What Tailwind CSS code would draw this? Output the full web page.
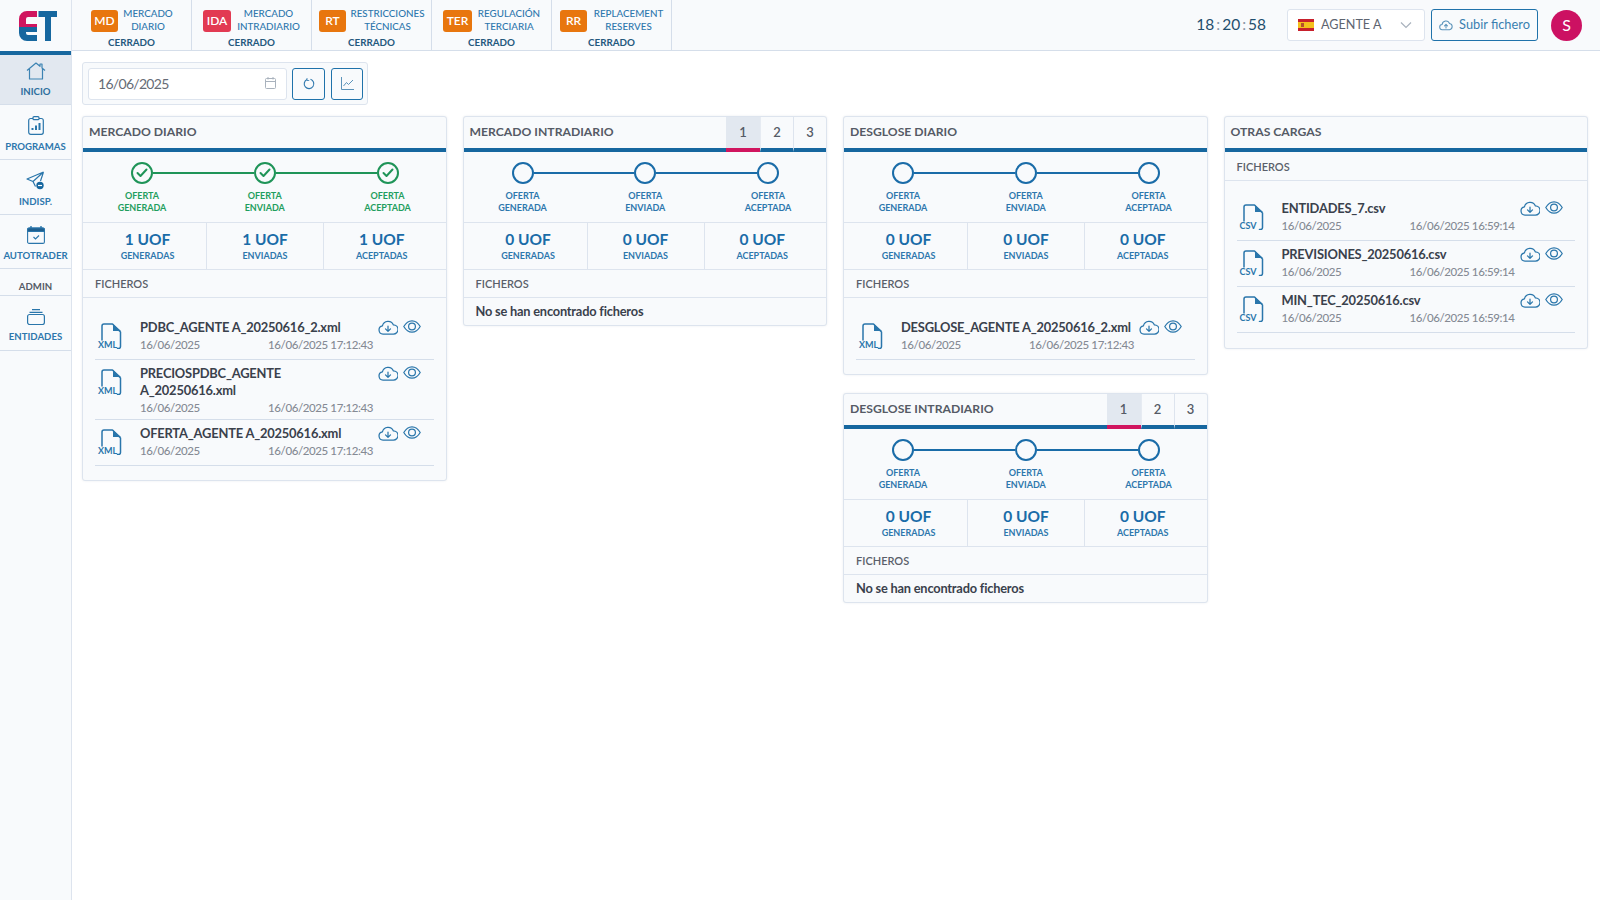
<!DOCTYPE html>
<html lang="es">
<head>
    <meta charset="UTF-8">
    <title>ET - Inicio</title>
    <script src="https://cdn.jsdelivr.net/npm/@tailwindcss/browser@4"></script>
</head>
<body class="bg-white [font-family:Lato,sans-serif] text-[#333a45] overflow-hidden">
<div class="flex h-[900px]">
    <!-- Sidebar -->
    <aside class="w-[72px] shrink-0 bg-[#f8fafc] border-r border-[#dde4ee] flex flex-col">
        <div class="h-[51px] flex items-center justify-center pl-[4px]">
            <svg width="38" height="30" viewBox="0 0 38 30">
                <path d="M8 0h10v6H9a2 2 0 0 0-2 2v5h11v5H0V8a8 8 0 0 1 8-8z" fill="#d0155f"/>
                <path d="M0 16h18v5H7v1a2 2 0 0 0 2 2h9v6H8a8 8 0 0 1-8-8z" fill="#16679f"/>
                <path d="M19.500 0H38v6h-6v24h-6V6h-6.500z" fill="#16679f"/>
            </svg>
        </div>
        <div class="h-[4px] bg-[#16679f]"></div>
        <div id="nav"></div>
    </aside>

    <div class="flex-1 min-w-0">
        <!-- Top bar -->
        <header class="h-[51px] bg-[#f8fafc] border-b border-[#d5deea] flex items-stretch">
            <div id="markets" class="flex"></div>
            <div class="ml-auto flex items-center pr-[18px]">
                <div class="text-[15.5px] text-[#1f4e6e] mr-[21px]">18<span class="text-[#8a97a5] mx-[2px]">:</span>20<span class="text-[#8a97a5] mx-[2px]">:</span>58</div>
                <div class="w-[138px] h-[32px] bg-white border border-[#dde4ee] rounded-[3px] flex items-center pl-[10px] pr-[12px] mr-[6px]">
                    <span class="w-[16px] h-[12px] flex flex-col mr-[7px]">
                        <span class="h-[3px] bg-[#c8202c]"></span>
                        <span class="h-[6px] bg-[#f5bf1c] pl-[3px] pt-[1px]"><span class="block w-[3px] h-[4px] bg-[#b5502a]"></span></span>
                        <span class="h-[3px] bg-[#c8202c]"></span>
                    </span>
                    <span class="text-[12.6px] text-[#5d6470]">AGENTE A</span>
                    <svg class="ml-auto" width="12" height="8" viewBox="0 0 12 8" fill="none" stroke="#a9b2bd" stroke-width="1.200"><path d="M1 1.500l5 5 5-5"/></svg>
                </div>
                <button class="w-[107px] h-[32px] border border-[#1f72aa] rounded-[3px] flex items-center justify-center gap-[6px] text-[12.8px] text-[#3a7fb0] mr-[13px]">
                    <svg width="14" height="12" viewBox="0 0 24 20" fill="none" stroke="#5b93ba" stroke-width="1.800" stroke-linecap="round" stroke-linejoin="round"><path d="M6 18a4.500 4.500 0 0 1-.6-9A6.500 6.500 0 0 1 18 7.500 5.300 5.300 0 0 1 18 18z"/><path d="M12 15V9M9.500 11.500L12 9l2.500 2.500"/></svg>
                    Subir fichero
                </button>
                <div class="w-[31px] h-[31px] rounded-full bg-[#cc1162] text-white text-[16px] flex items-center justify-center">S</div>
            </div>
        </header>

        <main class="pt-[11px] pl-[10px] pr-[12px]">
            <!-- Date picker -->
            <div class="w-[286px] h-[43px] bg-[#f8fafc] border border-[#dde4ee] rounded-[3px] flex items-center pl-[5px] gap-[5px]">
                <div class="w-[199px] h-[32px] bg-white border border-[#dde4ee] rounded-[3px] flex items-center justify-between pl-[9px] pr-[10px] pb-[1px] text-[14px] tracking-[-0.7px] text-[#666c76]">
                    16/06/2025
                    <svg width="11" height="12" viewBox="0 0 11 12" fill="none" stroke="#a9b2bd" stroke-width="1"><rect x="0.500" y="1.500" width="10" height="10" rx="1"/><path d="M0.500 4.500h10M3 0v2.500M8 0v2.500"/></svg>
                </div>
                <button class="w-[33px] h-[32px] border border-[#1f72aa] rounded-[3px] flex items-center justify-center">
                    <svg width="12" height="12" viewBox="0 0 12 12" fill="none" stroke="#2d77ad" stroke-width="1.100"><path d="M7.500 1.300A4.800 4.800 0 1 1 4 1.500"/><path d="M4 0v2.500h2.200" stroke-width="0.800"/></svg>
                </button>
                <button class="w-[32px] h-[32px] ml-[1px] border border-[#1f72aa] rounded-[3px] flex items-center justify-center">
                    <svg width="13" height="13" viewBox="0 0 13 13" fill="none" stroke="#5b93ba" stroke-width="1"><path d="M0.500 0v12.500H13"/><path d="M2.500 9l3-3.500 2 2L12 3"/></svg>
                </button>
            </div>
            <!-- Columns -->
            <div class="grid grid-cols-4 gap-x-[16px] items-start mt-[11px]">
                <div id="col1"></div>
                <div id="col2"></div>
                <div id="col3" class="flex flex-col gap-[18px]"></div>
                <div id="col4"></div>
            </div>
        </main>
    </div>
</div>

<script>
const cloudIcon = `<svg width="20" height="16" viewBox="0 0 24 19" fill="none" stroke="#2a76ab" stroke-width="1.500" stroke-linecap="round" stroke-linejoin="round"><path d="M6 18a5 5 0 0 1-.7-9.900A7 7 0 0 1 18.500 7 5.500 5.500 0 0 1 18.500 18z"/><path d="M12 8.500v6M9 11.800l3 3 3-3"/></svg>`;
const eyeIcon = `<svg width="18" height="13" viewBox="0 0 18 13" fill="none" stroke="#2a76ab" stroke-width="1.200"><path d="M0.800 6.500C3 2.700 5.800 0.800 9 0.800s6 1.900 8.200 5.700C15 10.300 12.200 12.200 9 12.200S3 10.300 0.800 6.500z"/><circle cx="9" cy="6.500" r="3.400"/></svg>`;

const navIcons = {
    home: `<svg width="20" height="18" viewBox="0 0 20 18" fill="none" stroke="#3d83b3" stroke-width="1.200" stroke-linejoin="round"><path d="M1 8.500L10 1l4 3.300V2h2v4l3 2.500M3.500 7v10h13V7"/></svg>`,
    prog: `<svg width="16" height="19" viewBox="0 0 16 19" fill="none" stroke="#2a76ab" stroke-width="1.200"><rect x="0.700" y="2.500" width="14.600" height="15.800" rx="2"/><rect x="5" y="0.700" width="6" height="3" rx="1" fill="#f8fafc"/><path d="M4.500 14v-2M8 14V9.500M11.500 14V7" stroke-width="2"/></svg>`,
    plane: `<svg width="19" height="19" viewBox="0 0 19 19" fill="none" stroke="#2a76ab" stroke-width="1.200" stroke-linejoin="round"><path d="M17.500 1L1 8l6 2.500 2.500 5M17.500 1L7 10.500M17.500 1l-3 9"/><circle cx="14" cy="14.500" r="3.700" fill="#16679f" stroke="none"/><path d="M12 14.500h4" stroke="#fff" stroke-width="1.200"/></svg>`,
    cal: `<svg width="18" height="18" viewBox="0 0 18 18" fill="none" stroke="#2a76ab" stroke-width="1.100"><rect x="0.600" y="2" width="16.800" height="15.400" rx="1.500"/><path d="M0.600 3.500a1.500 1.500 0 0 1 1.500-1.500h13.800a1.500 1.500 0 0 1 1.500 1.500V5.500H0.600z" fill="#1f5f8f"/><path d="M4 0v2M14 0v2" stroke-width="1.400"/><path d="M6.500 11l2 2 3.500-3.500"/></svg>`,
    stack: `<svg width="18" height="16" viewBox="0 0 18 16" fill="none" stroke="#2a76ab" stroke-width="1.200"><rect x="0.600" y="5.500" width="16.800" height="10" rx="2"/><path d="M2.500 3.300h13M5 0.700h8"/></svg>`
};

const navItems = [
    { label: 'INICIO', icon: navIcons.home, h: 'h-[50px] pt-[2px]', active: true },
    { label: 'PROGRAMAS', icon: navIcons.prog, h: 'h-[55px] pt-[7px]' },
    { label: 'INDISP.', icon: navIcons.plane, h: 'h-[55px] pt-[7px]' },
    { label: 'AUTOTRADER', icon: navIcons.cal, h: 'h-[54px] pt-[7px]' },
    { admin: true },
    { label: 'ENTIDADES', icon: navIcons.stack, h: 'h-[55px] pt-[7px]' }
];

document.getElementById('nav').innerHTML = navItems.map(item => {
    if (item.admin) {
        return `<div class="h-[27px] border-b border-[#d5deea] flex items-center justify-center pt-[10px] text-[9.6px] font-bold text-[#555b66]">ADMIN</div>`;
    }
    return `<div class="${item.h} ${item.active ? 'bg-[#e2e8f0]' : ''} border-b border-[#d5deea] flex flex-col items-center justify-center gap-[5px] text-[9.6px] font-bold ${item.active ? 'text-[#2d6f9e]' : 'text-[#2d77ad]'}">${item.icon}<span>${item.label}</span></div>`;
}).join('');

const markets = [
    { code: 'MD', name: 'MERCADO<br>DIARIO', red: false, badge: 'w-[27px] ml-[19px]', text: 'w-[60px]' },
    { code: 'IDA', name: 'MERCADO<br>INTRADIARIO', red: true, badge: 'w-[28px] ml-[11px]', text: 'w-[75px]' },
    { code: 'RT', name: 'RESTRICCIONES<br>TÉCNICAS', red: false, badge: 'w-[27px] ml-[7px]', text: 'w-[83px]' },
    { code: 'TER', name: 'REGULACIÓN<br>TERCIARIA', red: false, badge: 'w-[29px] ml-[11px]', text: 'w-[74px]' },
    { code: 'RR', name: 'REPLACEMENT<br>RESERVES', red: false, badge: 'w-[27px] ml-[8px]', text: 'w-[83px]' }
];

document.getElementById('markets').innerHTML = markets.map(m => `
    <div class="w-[120px] border-r border-[#d5deea] flex flex-col">
        <div class="flex items-start pt-[7px] h-[36px]">
            <span class="${m.badge} shrink-0 mt-[3px] h-[22px] rounded-[3px] ${m.red ? 'bg-[#e23a52]' : 'bg-[#e8760e]'} text-white text-[12px] font-semibold flex items-center justify-center">${m.code}</span>
            <span class="${m.text} text-center text-[9.8px] leading-[13px] font-medium text-[#2d77ad]">${m.name}</span>
        </div>
        <div class="text-center text-[9.8px] leading-[12px] font-bold text-[#24587d]">CERRADO</div>
    </div>`).join('');

function stepper(done) {
    const circle = done
        ? `<span class="w-[22px] h-[22px] shrink-0 rounded-full border-2 border-[#1f9458] flex items-center justify-center"><svg width="12" height="10" viewBox="0 0 12 10" fill="none" stroke="#1f9458" stroke-width="2" stroke-linecap="round" stroke-linejoin="round"><path d="M1.500 5l3 3 6-6.500"/></svg></span>`
        : `<span class="w-[22px] h-[22px] shrink-0 rounded-full border-2 border-[#1a6ca8]"></span>`;
    const line = `<span class="flex-1 h-[2px] ${done ? 'bg-[#1f9458]' : 'bg-[#1a6ca8]'}"></span>`;
    const labelCls = `w-[62px] text-center text-[9px] leading-[12px] font-bold ${done ? 'text-[#1f9e5e]' : 'text-[#2d77ad]'}`;
    return `
    <div class="h-[70px] pt-[10px]">
        <div class="flex items-center pl-[48px] pr-[47px]">${circle}${line}${circle}${line}${circle}</div>
        <div class="flex justify-between pl-[28px] pr-[27px] mt-[6px]">
            <span class="${labelCls}">OFERTA<br>GENERADA</span>
            <span class="${labelCls}">OFERTA<br>ENVIADA</span>
            <span class="${labelCls}">OFERTA<br>ACEPTADA</span>
        </div>
    </div>`;
}

function stats(n) {
    const cell = (cls, label) => `
        <div class="${cls} flex flex-col items-center pt-[5px]">
            <span class="text-[15.5px] leading-[22px] font-bold text-[#1a6ca8]">${n} UOF</span>
            <span class="text-[9px] leading-[11px] font-bold text-[#2d77ad]">${label}</span>
        </div>`;
    return `<div class="h-[47px] flex border-t border-[#dde4ee]">
        ${cell('w-[124px] pl-[6px] border-r border-[#dde4ee]', 'GENERADAS')}
        ${cell('w-[117px] border-r border-[#dde4ee]', 'ENVIADAS')}
        ${cell('flex-1 pr-[6px]', 'ACEPTADAS')}
    </div>`;
}

function fileRow(f, date, stamp, ext) {
    return `
    <div class="${f.tall ? 'h-[60px]' : 'h-[46px]'} border-b border-[#d5deea] flex">
        <div class="w-[45px] shrink-0 pl-[3px] pt-[9px]">
            <div class="relative w-[24px] h-[26px]">
                <svg width="24" height="26" viewBox="0 0 24 26" fill="none" stroke="#2a76ab" stroke-width="1.500" stroke-linecap="round" stroke-linejoin="round"><path d="M4 17V3a2 2 0 0 1 2-2h8.500l8 8v14.500a2 2 0 0 1-2 2h-1"/><path d="M15 1v7h8" fill="#2a76ab" stroke="none"/></svg>
                <span class="absolute left-[0px] bottom-[-1px] text-[9px] leading-[10px] font-bold text-[#2a76ab]">${ext}</span>
            </div>
        </div>
        <div class="w-[233px] shrink-0 pt-[5px]">
            <div class="text-[12.9px] leading-[17px] tracking-[-0.2px] font-bold text-[#3a414c] whitespace-nowrap">${f.name}</div>
            <div class="flex justify-between text-[11.5px] leading-[17px] tracking-[-0.4px] font-medium text-[#858a94]"><span>${date}</span><span>${stamp}</span></div>
        </div>
        <div class="h-[25px] flex items-center gap-[5px] pl-[5px]">${cloudIcon}${eyeIcon}</div>
    </div>`;
}

const noFiles = `<div class="h-[27px] pl-[12px] flex items-center text-[12.8px] tracking-[-0.2px] font-bold text-[#3a414c]">No se han encontrado ficheros</div>`;

function filesBlock(c) {
    if (!c.files.length) return noFiles;
    const pad = c.step === undefined ? 'pt-[14px] pb-[15px]' : 'pt-[16px] pb-[14px]';
    return `<div class="px-[12px] ${pad}">${c.files.map(f => fileRow(f, '16/06/2025', c.stamp, c.ext)).join('')}</div>`;
}

function card(c) {
    const tabs = c.tabs ? `<div class="ml-auto flex h-[35px]">
        <span class="w-[34px] bg-[#e2e8f0] border-b-[4px] border-[#d0155f] flex items-center justify-center text-[13px] font-semibold text-[#555b66]">1</span>
        <span class="w-[33px] border-l border-[#e6ebf2] border-b-[4px] border-b-[#16679f] flex items-center justify-center text-[13px] font-semibold text-[#555b66]">2</span>
        <span class="w-[33px] border-l border-[#dde4ee] border-b-[4px] border-b-[#16679f] flex items-center justify-center text-[13px] font-semibold text-[#555b66]">3</span>
    </div>` : '';
    return `
    <section class="bg-[#f8fafc] border border-[#dde4ee] rounded-[3px] shadow-[0_0_2px_rgba(100,120,150,0.15)]">
        <div class="h-[35px] flex border-b-[4px] border-[#16679f] relative">
            <h3 class="pl-[6px] pt-[6px] text-[12.2px] leading-[18px] font-bold text-[#555b66]">${c.title}</h3>
            <div class="ml-auto h-[35px]">${tabs}</div>
        </div>
        ${c.step === undefined ? '' : stepper(c.step) + stats(c.step ? 1 : 0)}
        <div class="h-[29px] ${c.step === undefined ? '' : 'border-t'} border-b border-[#dde4ee] pl-[12px] pt-[2px] flex items-center text-[11px] font-semibold text-[#5a5f6a]">FICHEROS</div>
        ${filesBlock(c)}
    </section>`;
}

document.getElementById('col1').innerHTML = card({
    title: 'MERCADO DIARIO', step: true, stamp: '16/06/2025 17:12:43', ext: 'XML',
    files: [
        { name: 'PDBC_AGENTE A_20250616_2.xml' },
        { name: 'PRECIOSPDBC_AGENTE<br>A_20250616.xml', tall: true },
        { name: 'OFERTA_AGENTE A_20250616.xml' }
    ]
});
document.getElementById('col2').innerHTML = card({ title: 'MERCADO INTRADIARIO', step: false, tabs: true, files: [] });
document.getElementById('col3').innerHTML = card({
    title: 'DESGLOSE DIARIO', step: false, stamp: '16/06/2025 17:12:43', ext: 'XML',
    files: [{ name: 'DESGLOSE_AGENTE A_20250616_2.xml' }]
}) + card({ title: 'DESGLOSE INTRADIARIO', step: false, tabs: true, files: [] });
document.getElementById('col4').innerHTML = card({
    title: 'OTRAS CARGAS', stamp: '16/06/2025 16:59:14', ext: 'CSV',
    files: [
        { name: 'ENTIDADES_7.csv' },
        { name: 'PREVISIONES_20250616.csv' },
        { name: 'MIN_TEC_20250616.csv' }
    ]
});
</script>
</body>
</html>
